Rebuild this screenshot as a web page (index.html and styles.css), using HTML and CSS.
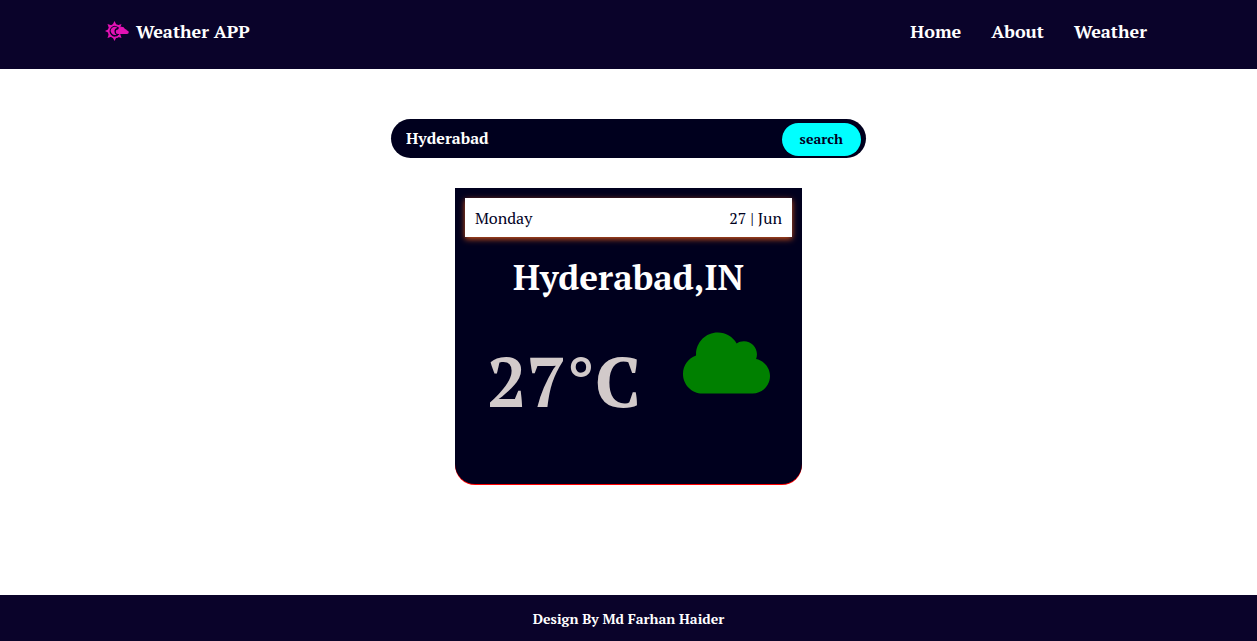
FILE: index.html
```html
<!DOCTYPE html>
<html lang="en">
<head>
  <meta charset="utf-8">
  <meta name="viewport" content="width=device-width, initial-scale=1">
  <title>Weather APP</title>
  <link rel="stylesheet" href="styles.css">
</head>
<body>
  <header class="site-header">
    <a class="brand" href="#">
      <svg class="brand-icon" viewBox="0 0 48 40" aria-hidden="true">
        <g fill="#e312b4">
          <path d="M19 0l4 8h-8zM19 40l4-8h-8zM0 20l8-4v8zM5 6l9 3-6 6zM33 6l-9 3 6 6zM5 34l9-3-6-6zM33 34l-9-3 6-6z"/>
          <path d="M29 12A12.500 12.500 0 1 0 29 29" fill="none" stroke="#e312b4" stroke-width="3.500"/>
          <path d="M25 14a8 8 0 1 0-2 13 6 6 0 0 1-4-6 6 6 0 0 1 6-7z"/>
          <path d="M26 26a4.500 4.500 0 0 1 0-9 7.500 7.500 0 0 1 14-1q3 0 4 3a3.500 3.500 0 0 1 0 7z"/>
        </g>
      </svg>
      <span>Weather APP</span>
    </a>
    <nav class="menu" aria-label="Main">
      <a href="#">Home</a>
      <a href="#">About</a>
      <a href="#">Weather</a>
    </nav>
  </header>
  <main class="content">
    <form class="search">
      <input class="search-input" type="text" value="Hyderabad" aria-label="City name">
      <button class="search-button" type="button">search</button>
    </form>
    <section class="card">
      <div class="date-bar">
        <span>Monday</span>
        <span>27 | Jun</span>
      </div>
      <h1 class="city">Hyderabad,IN</h1>
      <div class="reading">
        <p class="temperature">27°C</p>
        <svg class="cloud" viewBox="0 0 640 512" role="img" aria-label="Cloudy">
          <path fill="#008000" d="M537.600 226.600c4.100-10.700 6.400-22.400 6.400-34.600 0-53-43-96-96-96-19.700 0-38.100 6-53.300 16.200C367 64.200 315.300 32 256 32c-88.400 0-160 71.600-160 160 0 2.700.1 5.400.2 8.100C40.200 219.800 0 273.200 0 336c0 79.500 64.500 144 144 144h368c70.700 0 128-57.300 128-128 0-61.900-44-113.600-102.400-125.400z"/>
        </svg>
      </div>
    </section>
  </main>
  <footer class="site-footer">Design By Md Farhan Haider</footer>
</body>
</html>
```
FILE: styles.css
```css
* {
  box-sizing: border-box;
  margin: 0;
  padding: 0;
}

body {
  display: flex;
  flex-direction: column;
  min-height: 100vh;
  background: #fff;
  color: #fff;
  font-family: "PT Serif", "Liberation Serif", serif;
}

a {
  color: inherit;
  text-decoration: none;
}

.site-header {
  display: flex;
  justify-content: space-between;
  padding: 19px 110px 26px 105px;
  background: #0a032a;
  font-size: 18px;
  font-weight: 700;
  line-height: 24px;
}

.brand {
  display: flex;
  align-items: center;
  gap: 7px;
}

.brand-icon {
  width: 24px;
  height: 20px;
}

.menu {
  display: flex;
  gap: 30px;
}

.content {
  flex: 1;
  display: flex;
  flex-direction: column;
  align-items: center;
  gap: 30px;
  padding: 50px 16px;
}

.search {
  display: flex;
  width: 100%;
  max-width: 475px;
  padding: 4px 5px 2px 15px;
  border-radius: 20px;
  background: #00001e;
}

.search-input {
  flex: 1;
  min-width: 0;
  padding-bottom: 3px;
  border: 0;
  outline: 0;
  background: transparent;
  color: #fff;
  font: 700 16px/24px "PT Serif", "Liberation Serif", serif;
}

.search-button {
  padding: 4px 18px 5px;
  border: 0;
  border-radius: 17px;
  background: #0ff;
  color: #00001e;
  font: 700 14px/24px "PT Serif", "Liberation Serif", serif;
}

.card {
  width: 100%;
  max-width: 347px;
  padding: 10px 10px 57px;
  border-radius: 0 0 20px 20px;
  background: #00001e;
  box-shadow: 0 1px 0 #f00;
}

.date-bar {
  display: flex;
  justify-content: space-between;
  padding: 8px 10px 7px;
  background: #fff;
  box-shadow: 0 2px 6px #d2541b;
  color: #00001e;
  font-size: 16px;
  line-height: 24px;
}

.city {
  margin-top: 16px;
  font-size: 35px;
  line-height: 48px;
  text-align: center;
}

.reading {
  display: flex;
  justify-content: space-between;
  align-items: flex-start;
  padding: 27px 22px 0;
}

.temperature {
  padding-top: 6px;
  color: #d2caca;
  font-size: 70px;
  font-weight: 700;
  line-height: 93px;
}

.cloud {
  width: 87px;
  height: 70px;
}

.site-footer {
  padding: 14px 16px 12px;
  background: #0a032a;
  font-size: 14px;
  font-weight: 700;
  line-height: 20px;
  text-align: center;
}
```
